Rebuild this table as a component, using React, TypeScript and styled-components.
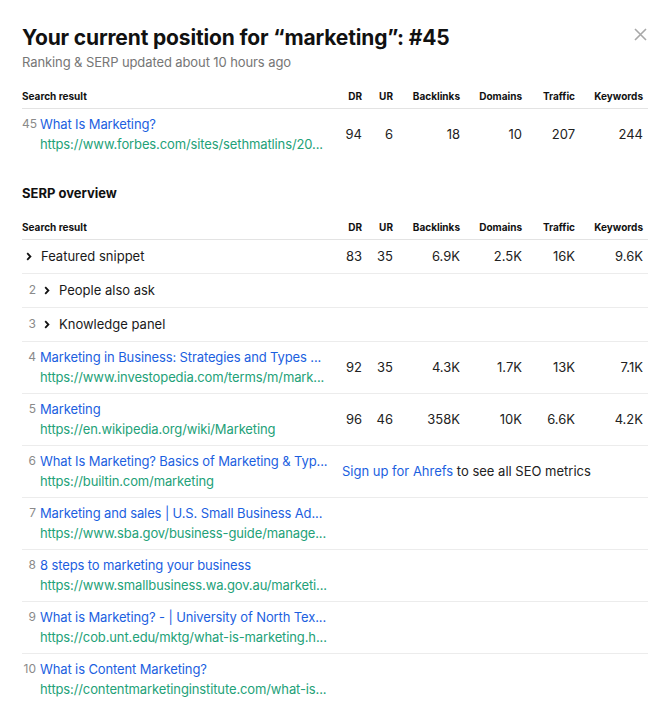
import React from "react";
import styled, { createGlobalStyle } from "styled-components";

const GlobalStyle = createGlobalStyle`
	html, body {
		margin: 0;
		background: #fff;
	}
	body {
		font-family: Inter, "Noto Sans", sans-serif;
		color: #1a1a1a;
	}
`;

const COLS = "313px 32px 31px 67px 62px 53px 68px";

interface Metrics {
	dr: string;
	ur: string;
	backlinks: string;
	domains: string;
	traffic: string;
	keywords: string;
}

interface Result {
	pos?: number;
	title: string;
	url: string;
	metrics?: Metrics;
	signup?: boolean;
}

interface Feature {
	pos?: number;
	label: string;
	metrics?: Metrics;
}

const current: Result = {
	pos: 45,
	title: "What Is Marketing?",
	url: "https://www.forbes.com/sites/sethmatlins/20...",
	metrics: { dr: "94", ur: "6", backlinks: "18", domains: "10", traffic: "207", keywords: "244" },
};

const features: Feature[] = [
	{
		label: "Featured snippet",
		metrics: { dr: "83", ur: "35", backlinks: "6.9K", domains: "2.5K", traffic: "16K", keywords: "9.6K" },
	},
	{ pos: 2, label: "People also ask" },
	{ pos: 3, label: "Knowledge panel" },
];

const results: Result[] = [
	{
		pos: 4,
		title: "Marketing in Business: Strategies and Types ...",
		url: "https://www.investopedia.com/terms/m/mark...",
		metrics: { dr: "92", ur: "35", backlinks: "4.3K", domains: "1.7K", traffic: "13K", keywords: "7.1K" },
	},
	{
		pos: 5,
		title: "Marketing",
		url: "https://en.wikipedia.org/wiki/Marketing",
		metrics: { dr: "96", ur: "46", backlinks: "358K", domains: "10K", traffic: "6.6K", keywords: "4.2K" },
	},
	{
		pos: 6,
		title: "What Is Marketing? Basics of Marketing & Typ...",
		url: "https://builtin.com/marketing",
		signup: true,
	},
	{
		pos: 7,
		title: "Marketing and sales | U.S. Small Business Ad...",
		url: "https://www.sba.gov/business-guide/manage...",
	},
	{
		pos: 8,
		title: "8 steps to marketing your business",
		url: "https://www.smallbusiness.wa.gov.au/marketi...",
	},
	{
		pos: 9,
		title: "What is Marketing? - | University of North Tex...",
		url: "https://cob.unt.edu/mktg/what-is-marketing.h...",
	},
	{
		pos: 10,
		title: "What is Content Marketing?",
		url: "https://contentmarketinginstitute.com/what-is...",
	},
];

const Modal = styled.div`
	position: relative;
	width: 668px;
	box-sizing: border-box;
	padding: 24px 20px 20px 22px;
`;

const CloseButton = styled.button`
	position: absolute;
	top: 27px;
	right: 21px;
	width: 14px;
	height: 14px;
	padding: 0;
	border: none;
	background: none;
	color: #a8a8a8;
	display: flex;
	align-items: center;
	justify-content: center;
`;

const Title = styled.h1`
	margin: 0;
	font-size: 21px;
	line-height: 28px;
	font-weight: 700;
	letter-spacing: -0.15px;
	color: #111;
`;

const Subtitle = styled.div`
	margin-top: 1px;
	font-size: 13px;
	line-height: 18px;
	letter-spacing: -0.1px;
	color: #767676;
`;

const SectionTitle = styled.h2`
	margin: 24px 0 0;
	font-size: 13px;
	line-height: 18px;
	font-weight: 700;
	color: #111;
`;

const HeadRow = styled.div`
	display: grid;
	grid-template-columns: ${COLS};
	margin-top: 18px;
	padding-bottom: 5px;
	border-bottom: 1px solid #e3e3e3;
	font-size: 10px;
	line-height: 14px;
	font-weight: 700;
	color: #111;
`;

const HeadCell = styled.div<{ $right?: boolean }>`
	text-align: ${(p) => (p.$right ? "right" : "left")};
	padding-right: ${(p) => (p.$right ? "5px" : "0")};
	white-space: nowrap;
`;

const Row = styled.div<{ $tall?: boolean }>`
	display: grid;
	grid-template-columns: ${COLS};
	align-items: center;
	padding: ${(p) => (p.$tall ? "5px 0 6px" : "6px 0 7px")};
	border-bottom: 1px solid #ececec;

	&:last-child {
		border-bottom: none;
	}
`;

const ResultCell = styled.div`
	display: flex;
	align-items: flex-start;
	min-width: 0;
`;

const Pos = styled.span`
	flex: none;
	width: 14px;
	margin-right: 4px;
	text-align: right;
	font-size: 12px;
	line-height: 20px;
	color: #8a8a8a;
`;

const TextBlock = styled.div`
	flex: 1;
	min-width: 0;
`;

const Link = styled.a<{ $url?: boolean }>`
	display: block;
	font-size: 13px;
	line-height: 20px;
	letter-spacing: -0.12px;
	color: ${(p) => (p.$url ? "#23a178" : "#1c5fdf")};
	text-decoration: none;
	white-space: nowrap;
	overflow: hidden;
	text-overflow: ellipsis;
`;

const ChevronSlot = styled.span`
	flex: none;
	display: flex;
	align-items: center;
	height: 20px;
	margin: 0 9px 0 4px;
	color: #111;
`;

const FeatureLabel = styled.span`
	font-size: 13px;
	line-height: 20px;
	color: #1a1a1a;
`;

const Value = styled.div`
	text-align: right;
	padding-right: 5px;
	font-size: 13px;
	line-height: 20px;
	color: #222;
	white-space: nowrap;
`;

const Signup = styled.div`
	grid-column: 2 / -1;
	padding-left: 7px;
	font-size: 13px;
	line-height: 20px;
	color: #222;
	white-space: nowrap;

	a {
		color: #1c5fdf;
		text-decoration: none;
	}
`;

const Chevron = () => (
	<svg width="6" height="9" viewBox="0 0 6 9" fill="none">
		<path d="M1.2 1.2L4.4 4.5L1.2 7.8" stroke="currentColor" strokeWidth="1.8" />
	</svg>
);

const CloseIcon = () => (
	<svg width="13" height="13" viewBox="0 0 13 13" fill="none">
		<path d="M1 1L12 12M12 1L1 12" stroke="currentColor" strokeWidth="1.6" />
	</svg>
);

const Head = () => (
	<HeadRow>
		<HeadCell>Search result</HeadCell>
		<HeadCell $right>DR</HeadCell>
		<HeadCell $right>UR</HeadCell>
		<HeadCell $right>Backlinks</HeadCell>
		<HeadCell $right>Domains</HeadCell>
		<HeadCell $right>Traffic</HeadCell>
		<HeadCell $right>Keywords</HeadCell>
	</HeadRow>
);

const MetricCells = ({ m }: { m: Metrics }) => (
	<>
		<Value>{m.dr}</Value>
		<Value>{m.ur}</Value>
		<Value>{m.backlinks}</Value>
		<Value>{m.domains}</Value>
		<Value>{m.traffic}</Value>
		<Value>{m.keywords}</Value>
	</>
);

const ResultRow = ({ r }: { r: Result }) => (
	<Row $tall>
		<ResultCell>
			<Pos>{r.pos}</Pos>
			<TextBlock>
				<Link href="#">{r.title}</Link>
				<Link href="#" $url>
					{r.url}
				</Link>
			</TextBlock>
		</ResultCell>
		{r.metrics && <MetricCells m={r.metrics} />}
		{r.signup && (
			<Signup>
				<a href="#">Sign up for Ahrefs</a> to see all SEO metrics
			</Signup>
		)}
	</Row>
);

const FeatureRow = ({ f }: { f: Feature }) => (
	<Row>
		<ResultCell>
			{f.pos && <Pos>{f.pos}</Pos>}
			<ChevronSlot>
				<Chevron />
			</ChevronSlot>
			<FeatureLabel>{f.label}</FeatureLabel>
		</ResultCell>
		{f.metrics && <MetricCells m={f.metrics} />}
	</Row>
);

export default function App() {
	return (
		<>
			<GlobalStyle />
			<Modal>
				<CloseButton aria-label="Close">
					<CloseIcon />
				</CloseButton>
				<Title>Your current position for “marketing”: #45</Title>
				<Subtitle>Ranking &amp; SERP updated about 10 hours ago</Subtitle>

				<Head />
				<div>
					<ResultRow r={current} />
				</div>

				<SectionTitle>SERP overview</SectionTitle>
				<Head />
				<div>
					{features.map((f) => (
						<FeatureRow key={f.label} f={f} />
					))}
					{results.map((r) => (
						<ResultRow key={r.pos} r={r} />
					))}
				</div>
			</Modal>
		</>
	);
}
